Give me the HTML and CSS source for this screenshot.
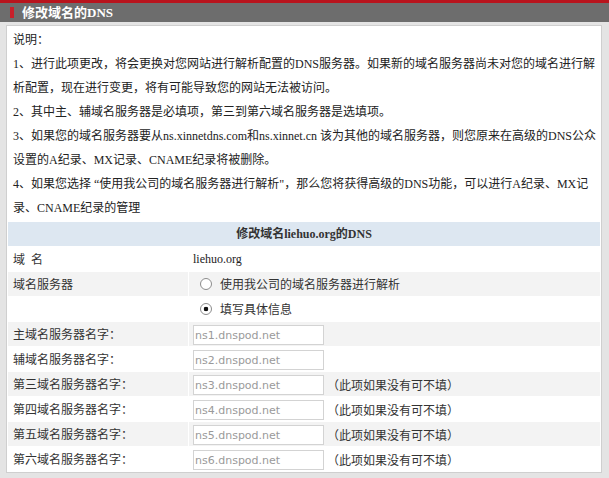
FILE: index.html
```html
<!DOCTYPE html>
<html lang="zh-CN">
<head>
<meta charset="utf-8">
<title>修改域名的DNS</title>
<link rel="stylesheet" href="styles.css">
</head>
<body>
<div class="titlebar"><span class="mark"></span><h1>修改域名的DNS</h1></div>
<div class="main">
  <div class="panel">
    <div class="notes">
      <p>说明：</p>
      <p>1、进行此项更改，将会更换对您网站进行解析配置的DNS服务器。如果新的域名服务器尚未对您的域名进行解析配置，现在进行变更，将有可能导致您的网站无法被访问。</p>
      <p>2、其中主、辅域名服务器是必填项，第三到第六域名服务器是选填项。</p>
      <p>3、如果您的域名服务器要从ns.xinnetdns.com和ns.xinnet.cn 该为其他的域名服务器，则您原来在高级的DNS公众设置的A纪录、MX记录、CNAME纪录将被删除。</p>
      <p>4、如果您选择 “使用我公司的域名服务器进行解析"，那么您将获得高级的DNS功能，可以进行A纪录、MX记录、CNAME纪录的管理</p>
    </div>
    <table class="dns">
      <tr><th colspan="2">修改域名liehuo.org的DNS</th></tr>
      <tr><td class="label">域&ensp;名</td><td class="val">liehuo.org</td></tr>
      <tr class="alt"><td class="label">域名服务器</td><td class="val"><label class="opt"><input type="radio" name="nsmode">使用我公司的域名服务器进行解析</label></td></tr>
      <tr><td class="label"></td><td class="val"><label class="opt"><input type="radio" name="nsmode" checked>填写具体信息</label></td></tr>
      <tr class="alt"><td class="label">主域名服务器名字：</td><td class="val"><input class="ns" type="text" value="ns1.dnspod.net"></td></tr>
      <tr><td class="label">辅域名服务器名字：</td><td class="val"><input class="ns" type="text" value="ns2.dnspod.net"></td></tr>
      <tr class="alt"><td class="label">第三域名服务器名字：</td><td class="val"><input class="ns" type="text" value="ns3.dnspod.net"><span class="hint">（此项如果没有可不填）</span></td></tr>
      <tr><td class="label">第四域名服务器名字：</td><td class="val"><input class="ns" type="text" value="ns4.dnspod.net"><span class="hint">（此项如果没有可不填）</span></td></tr>
      <tr class="alt"><td class="label">第五域名服务器名字：</td><td class="val"><input class="ns" type="text" value="ns5.dnspod.net"><span class="hint">（此项如果没有可不填）</span></td></tr>
      <tr><td class="label">第六域名服务器名字：</td><td class="val"><input class="ns" type="text" value="ns6.dnspod.net"><span class="hint">（此项如果没有可不填）</span></td></tr>
    </table>
  </div>
</div>
</body>
</html>
```
FILE: styles.css
```css
body {
  margin: 0;
  background: #e4e4e4;
  color: #222;
  font: 12px/24px "Liberation Serif", "Noto Sans CJK SC", serif;
}
.titlebar {
  border-top: 3px solid #b8141d;
  height: 19px;
  background: #6d6d6d;
  display: flex;
  align-items: center;
  padding-left: 10px;
}
.mark {
  width: 4px;
  height: 11px;
  background: #c8202a;
  margin-right: 8px;
}
.titlebar h1 {
  margin: 0;
  font: bold 13px/19px "Liberation Serif", "Noto Sans CJK SC", serif;
  color: #fff;
}
.main {
  padding: 3px 7px 0 6px;
}
.panel {
  background: #fff;
  border: 1px solid #cfcfcf;
  padding-top: 2px;
}
.notes p {
  margin: 0;
  padding: 0 2px 0 6px;
}
.dns {
  width: 100%;
  border-spacing: 1px;
  margin-top: 1px;
}
.dns th {
  height: 24px;
  padding: 0;
  background: #dde7f1;
  font: bold 12px/24px "Liberation Serif", "Noto Sans CJK SC", serif;
  color: #333;
  text-align: center;
}
.dns td {
  height: 24px;
  padding: 0;
  line-height: 24px;
  white-space: nowrap;
}
.dns tr.alt td {
  background: #f3f3f3;
}
.dns td.label {
  width: 175px;
  padding-left: 5px;
  font-family: "Noto Sans CJK SC", sans-serif;
  color: #333;
}
.dns td.val {
  padding-left: 4px;
}
.opt {
  display: flex;
  align-items: center;
  font-family: "Noto Sans CJK SC", sans-serif;
  color: #333;
}
.opt input {
  appearance: none;
  -webkit-appearance: none;
  box-sizing: border-box;
  width: 12px;
  height: 12px;
  margin: 0 8px 0 7px;
  border: 1px solid #8c8c8c;
  border-radius: 50%;
  background: #fff;
}
.opt input:checked {
  background: radial-gradient(circle, #111 0 2px, #fff 2.6px);
}
.ns {
  box-sizing: border-box;
  width: 131px;
  height: 20px;
  border: 1px solid #d3d3d3;
  padding: 0 1px;
  font: 11px "DejaVu Sans", sans-serif;
  color: #9a9a9a;
  vertical-align: middle;
}
.hint {
  margin-left: 3px;
  font-family: "Noto Sans CJK SC", sans-serif;
  line-height: 18px;
  color: #333;
  vertical-align: middle;
}
```
